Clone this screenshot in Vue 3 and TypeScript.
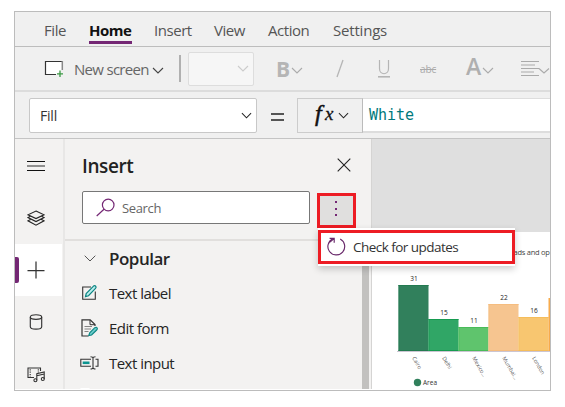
<script setup lang="ts">
interface Tab { label: string; active?: boolean }
interface Bar { value: number; top: number; color: string; edge: string; label: string }

const tabs: Tab[] = [
  { label: 'File' },
  { label: 'Home', active: true },
  { label: 'Insert' },
  { label: 'View' },
  { label: 'Action' },
  { label: 'Settings' },
]

const items = [
  { icon: 'label', text: 'Text label' },
  { icon: 'form', text: 'Edit form' },
  { icon: 'input', text: 'Text input' },
]

const bars: Bar[] = [
  { value: 31, top: 53, color: '#31805c', edge: '#237a50', label: 'Cairo' },
  { value: 15, top: 87, color: '#30a666', edge: '#169b50', label: 'Delhi' },
  { value: 11, top: 95, color: '#5fc46d', edge: '#49bb59', label: 'Mexico...' },
  { value: 22, top: 72, color: '#f6c590', edge: '#f5bd80', label: 'Mumbai...' },
  { value: 16, top: 85, color: '#f8c670', edge: '#f5bd5b', label: 'London' },
]
</script>

<template>
  <div class="page">
    <div class="window">
      <nav class="tabs">
        <span v-for="t in tabs" :key="t.label" class="tab" :class="{ active: t.active }">{{ t.label }}</span>
      </nav>

      <div class="toolbar">
        <svg class="new-icon" width="20" height="18" viewBox="0 0 20 18" fill="none">
          <path d="M12 14.5H1.5V1.5H18.5V9" fill="#fff" />
          <path d="M12 14.5H1.5V1.5H18" stroke="#333" stroke-width="1.2" />
          <path d="M18.3 1V10" stroke="#888" stroke-width="1.5" />
          <path d="M16 10.5V17M13 13.8H19" stroke="#3c9a45" stroke-width="1.3" />
        </svg>
        <span class="new-text">New screen</span>
        <svg class="chev dark" width="12" height="7" viewBox="0 0 12 7"><path d="M1 1L6 6L11 1" /></svg>
        <span class="sep"></span>
        <span class="combo"><svg class="chev" width="12" height="7" viewBox="0 0 12 7"><path d="M1 1L6 6L11 1" /></svg></span>
        <span class="bold">B</span>
        <svg class="chev c-bold" width="12" height="7" viewBox="0 0 12 7"><path d="M1 1L6 6L11 1" /></svg>
        <svg class="slash" width="8" height="19" viewBox="0 0 8 19"><path d="M1 18L7 1" stroke="#b5b5b5" stroke-width="1.3" /></svg>
        <svg class="under" width="12" height="19" viewBox="0 0 12 19" fill="none" stroke="#b5b5b5"><path d="M1.5 1V9.5C1.5 16.5 10.5 16.5 10.5 9.5V1" stroke-width="1.2" /><path d="M0 17.8H12" stroke-width="1.6" /></svg>
        <span class="strike">abc</span>
        <span class="color-a">A</span>
        <svg class="chev c-a" width="12" height="7" viewBox="0 0 12 7"><path d="M1 1L6 6L11 1" /></svg>
        <svg class="align" width="29" height="17" viewBox="0 0 29 17" fill="none" stroke="#aaa" stroke-width="1.1"><path d="M0 1.5H18M0 5H14M0 8.5H18M0 12H13M0 15.5H18" /><path d="M18 8.5L23 13L28 8.5" /></svg>
      </div>

      <div class="formula">
        <div class="property"><span>Fill</span><svg class="chev black" width="11" height="7" viewBox="0 0 12 7"><path d="M1 1L6 6L11 1" /></svg></div>
        <svg class="equals" width="13" height="8" viewBox="0 0 13 8"><path d="M0 1H13M0 7H13" stroke="#222" stroke-width="1.7" /></svg>
        <div class="fx"><span class="f">f</span><span class="x">x</span><svg class="chev black" width="11" height="7" viewBox="0 0 12 7"><path d="M1 1L6 6L11 1" /></svg></div>
        <div class="expr">White</div>
      </div>

      <div class="body">
        <aside class="rail">
          <div class="rail-item menu">
            <svg width="18" height="12" viewBox="0 0 18 12" stroke-width="1"><path d="M0 1.5H18M0 10.5H18" stroke="#111" /><path d="M0 6H18" stroke="#777" stroke-width="1.6" /></svg>
          </div>
          <div class="rail-item layers">
            <svg width="18" height="17" viewBox="0 0 18 17" fill="none" stroke="#252525" stroke-width="1.1"><path d="M9 1L17 4.8L9 8.6L1 4.8Z" /><path d="M3.5 6.2L1 7.6L9 11.6L17 7.6L14.5 6.2M3.5 9.4L1 10.8L9 15.2L17 10.8L14.5 9.4" /></svg>
          </div>
          <div class="rail-item current">
            <svg width="18" height="18" viewBox="0 0 18 18"><path d="M9 .5V17.5M.5 9.5H17.5" stroke="#333" stroke-width="1.25" /></svg>
          </div>
          <div class="rail-item data">
            <svg width="14" height="16" viewBox="0 0 14 16" fill="none" stroke="#333" stroke-width="1.15"><ellipse cx="7" cy="3" rx="5.7" ry="2.3" /><path d="M1.3 3V12.7C1.3 16 12.7 16 12.7 12.7V3" /></svg>
          </div>
          <div class="rail-item media">
            <svg width="19" height="17" viewBox="0 0 19 17" fill="none" stroke="#333" stroke-width="1.1"><path d="M7 11.5H1V2H13.5V5" /><path d="M3.2 3.2V11M11.3 3.2V6.5" stroke-dasharray="1.2 1.2" /><path d="M9.8 14.2V7.8L17.2 6V13M9.8 9.8L17.2 8" /><circle cx="8.4" cy="14.3" r="1.5" /><circle cx="15.8" cy="13" r="1.5" /></svg>
          </div>
        </aside>

        <section class="panel">
          <header class="panel-head">
            <h2>Insert</h2>
            <svg width="14" height="14" viewBox="0 0 14 14"><path d="M.7 .7L13.3 13.3M13.3 .7L.7 13.3" stroke="#222" stroke-width="1.1" /></svg>
          </header>
          <div class="search-row">
            <div class="search">
              <svg width="19" height="19" viewBox="0 0 19 19" fill="none" stroke="#742774" stroke-width="1.2"><circle cx="12.2" cy="7" r="5.8" /><path d="M8 11.2L.7 18" /></svg>
              <span>Search</span>
            </div>
            <div class="more">
              <i></i><i></i><i></i>
              <div class="popup">
                <div class="option">
                  <svg width="19" height="19" viewBox="0 0 19 19" fill="none" stroke="#68286a" stroke-width="1.15"><path d="M13.2 2.1A8.4 8.4 0 1 1 6 1.8" /><path d="M2.6 1.3H7.2V5.8M7 1.5L3 5.2" /></svg>
                  <span>Check for updates</span>
                </div>
              </div>
            </div>
          </div>
          <div class="tree">
            <div class="list">
              <div class="group">
                <svg width="12" height="7" viewBox="0 0 12 7" fill="none"><path d="M.7 .7L6 6L11.3 .7" stroke="#555" /></svg>
                <span>Popular</span>
              </div>
              <div v-for="it in items" :key="it.icon" class="item">
                <svg v-if="it.icon === 'label'" width="18" height="18" viewBox="0 0 18 18" fill="none">
                  <path d="M10.5 3H2.2V15.2H14.8V7.5" stroke="#333" stroke-width="1.1" />
                  <path d="M5 12.6L5.7 9.5L13 2.1Q14.4 1.2 15.3 2.4Q16 3.5 15 4.4L8 11.7Z" fill="#bceeed" stroke="#0b8583" stroke-width="1.2" />
                </svg>
                <svg v-else-if="it.icon === 'form'" width="18" height="18" viewBox="0 0 18 18" fill="none">
                  <path d="M8 17H1.5V.8H9.7L14.5 5.5V7" stroke="#333" stroke-width="1.2" /><path d="M9.5 1V5.7H14.5" stroke="#333" />
                  <path d="M4 7.5H11.5M4 10H10.5M4 12.5H8" stroke="#777" stroke-width=".9" />
                  <path d="M8.3 16.5L9.2 13.8L14.3 8.7Q16 7.7 16.7 9Q17.3 10 16.2 11L11.1 16Z" fill="#6ccdcb" stroke="#0b8583" stroke-width="1.1" />
                </svg>
                <svg v-else width="19" height="14" viewBox="0 0 19 14" fill="none">
                  <path d="M11 10.2H.8V3.3H11M15.5 3.3H18V10.2H15.5" stroke="#333" stroke-width="1.1" />
                  <path d="M2.7 6.8H9.5" stroke="#0b9490" stroke-width="2.6" />
                  <path d="M10.5 .8Q13 .8 13 2V11.8Q13 13 10.5 13M15.5 .8Q13 .8 13 2M13 11.8Q13 13 15.5 13" stroke="#333" stroke-width="1.1" />
                </svg>
                <span>{{ it.text }}</span>
              </div>
              <div class="next-item"></div>
            </div>
            <div class="scrollbar"></div>
          </div>
        </section>

        <main class="canvas">
          <div class="screen">
            <svg width="179" height="157" viewBox="0 0 179 157">
              <text class="chart-title" x="141.5" y="23">ads and op</text>
              <g v-for="(b, i) in bars" :key="b.label">
                <rect :x="26.5 + i * 30" :y="b.top" width="30" :height="119 - b.top" :fill="b.color" />
                <path :d="`M${26.5 + i * 30} ${b.top + .5}h30`" :stroke="b.edge" />
                <path :d="`M${27 + i * 30} ${b.top}V119`" :stroke="b.edge" stroke-width=".7" />
                <path :d="`M${26.5 + i * 30} 118.5h30`" :stroke="b.edge" />
                <text class="value" :x="42 + i * 30" :y="b.top - 4">{{ b.value }}</text>
                <text class="city" :transform="`translate(${40 + i * 30} 126) rotate(60)`">{{ b.label }}</text>
              </g>
              <rect x="176.5" y="66" width="2.5" height="53" fill="#f8ab4c" />
              <path d="M25 119.5H179" stroke="#cbc5d2" />
              <circle cx="45.5" cy="150.5" r="3.7" fill="#31805c" />
              <text class="legend" x="51" y="153">Area</text>
            </svg>
          </div>
        </main>
      </div>
    </div>
  </div>
</template>

<style>
body { margin: 0; background: #fff; overflow: hidden; }
</style>

<style scoped>
.page { box-sizing: border-box; width: 565px; height: 407px; padding: 11px 0 0 14px; background: #fff; font-family: "Open Sans", "Noto Sans", sans-serif; }
.window { box-sizing: border-box; width: 537px; height: 380px; border: 1px solid #bcbcbc; background: #f0f0f0; overflow: hidden; }
svg { display: block; flex: none; }
span, h2 { white-space: nowrap; }
.tabs { box-sizing: border-box; height: 35px; border-bottom: 1px solid #bdbdbd; display: grid; grid-template-columns: 45px 65px 60px 54px 65px 80px; padding-left: 29px; }
.tab { justify-self: start; height: 31.5px; line-height: 36px; font-size: 15px; letter-spacing: -.45px; color: #555; }
.tab:last-child { letter-spacing: -.2px; }
.tab.active { box-sizing: border-box; width: 43px; height: 32px; font-weight: 700; color: #111; border-bottom: 3px solid #742774; letter-spacing: -.5px; }
.toolbar { box-sizing: border-box; height: 45px; border-bottom: 2px solid #dcdcdc; display: flex; align-items: center; padding-left: 29px; }
.chev { fill: none; stroke: #ababab; stroke-width: 1.1; }
.chev.dark { stroke: #444; margin: 3px 0 0 3px; }
.chev.black { stroke: #222; }
.new-text { width: 75px; margin-left: 10px; font-size: 15px; letter-spacing: -.7px; color: #666; }
.sep { width: 2px; height: 27px; background: #b0b0b0; margin-left: 15px; }
.combo { box-sizing: border-box; width: 66px; height: 34px; margin-left: 7px; border: 1px solid #ddd; border-radius: 2px; background: #f6f6f6; display: flex; align-items: center; justify-content: flex-end; padding-right: 4px; }
.combo .chev { stroke: #ccc; }
.bold { margin-left: 22px; width: 15px; font-size: 21px; font-weight: 700; color: #b5b5b5; }
.c-bold { margin-top: 4px; }
.slash { margin-left: 33px; }
.under { margin-left: 34px; }
.strike { width: 17px; margin-left: 30px; font-size: 10px; letter-spacing: -.1px; text-decoration: line-through; color: #aaa; }
.color-a { width: 15px; margin-left: 29px; font-size: 23px; font-weight: 600; color: #afafaf; line-height: 26px; margin-bottom: 5px; }
.c-a { margin: 4px 0 0 1px; }
.align { margin-left: 27px; }
.formula { box-sizing: border-box; height: 47px; border-bottom: 1px solid #c4c4c4; display: flex; padding: 6px 0 6px 14px; }
.property { box-sizing: border-box; width: 228px; height: 35px; border: 1px solid #c8c8c8; border-radius: 2px; background: #fff; display: flex; align-items: center; justify-content: space-between; padding: 0 4px 0 10px; font-size: 14px; letter-spacing: -.2px; color: #333; }
.equals { margin: 15px 0 0 14px; }
.fx { box-sizing: border-box; width: 66px; height: 35px; margin-left: 13px; border: 1px solid #ccc; border-right-color: #bbb; display: flex; align-items: center; padding-left: 17px; font-family: "Liberation Serif", serif; font-style: italic; color: #111; }
.f { width: 10px; font-size: 24px; line-height: 28px; margin-bottom: 6px; -webkit-text-stroke: .5px #111; }
.x { width: 10px; font-size: 19px; margin-bottom: 4px; -webkit-text-stroke: .3px #111; }
.fx .chev { margin-left: 3px; }
.expr { box-sizing: border-box; flex: 1; height: 35px; border: solid #ddd; border-width: 1px 0 2px; background: #fff; padding-left: 6px; font-family: "DejaVu Sans Mono", monospace; font-size: 15px; line-height: 32px; color: #00797c; }
.body { display: flex; height: 250px; background: #f3f2f1; border-bottom: 1px solid #fff; }
.rail { box-sizing: border-box; width: 50px; border-right: 2px solid #e8e7e6; }
.rail-item { width: 47px; height: 52px; display: flex; align-items: center; box-sizing: border-box; padding-left: 12px; }
.menu { height: 53px; }
.layers { height: 52px; }
.current { background: #fff; position: relative; }
.current::before { content: ""; position: absolute; left: 0; top: 13px; width: 4px; height: 26px; border-radius: 0 2px 2px 0; background: #742774; }
.data { padding-left: 14px; }
.media { height: 41px; overflow: hidden; padding-top: 12px; }
.panel { width: 306px; display: flex; flex-direction: column; }
.panel-head { height: 52px; display: flex; align-items: center; justify-content: space-between; padding: 0 20px 0 17px; }
h2 { margin: 2px 0 0; font-size: 19px; font-weight: 600; letter-spacing: -.4px; color: #222; }
.panel-head { box-sizing: border-box; }
.search-row { box-sizing: border-box; height: 50px; display: flex; padding: 0 0 0 17px; border-bottom: 2px solid #e1dfdd; }
.search { box-sizing: border-box; width: 228px; height: 33px; border: 1px solid #777; border-radius: 2px; background: #fff; display: flex; align-items: center; padding-left: 13px; font-size: 13px; letter-spacing: -.35px; color: #666; }
.search span { margin-left: 7px; }
.more { box-sizing: border-box; position: relative; width: 39px; height: 35px; margin: 2px 0 0 7px; background: #e0dfde; border: 3px solid #ed1c24; display: flex; flex-direction: column; align-items: flex-start; padding: 5px 0 0 15px; gap: 4.5px; }
.more i { width: 2px; height: 2px; background: #742774; }
.popup { position: absolute; z-index: 2; left: -2px; top: 32px; width: 197px; height: 36px; padding-top: 2px; background: #fff; box-shadow: 0 3px 7px #0003; }
.option { box-sizing: border-box; width: 197px; height: 34px; border: 3px solid #ed1c24; display: flex; align-items: center; padding-left: 6px; background: #fff; font-size: 13.5px; letter-spacing: -.53px; color: #333; }
.option svg { margin-bottom: 2px; }
.option span { margin-left: 7px; margin-bottom: 1px; }
.tree { flex: 1; display: flex; min-height: 0; }
.list { width: 297px; overflow: hidden; }
.group { display: flex; align-items: center; height: 34px; padding-left: 19px; font-size: 17px; font-weight: 600; letter-spacing: -.5px; color: #252525; }
.group span { margin: 1px 0 0 13px; }
.item { display: flex; align-items: center; height: 35px; padding-left: 15px; font-size: 15px; letter-spacing: -.53px; color: #252525; }
.item svg { width: 19px; }
.item span { margin-left: 10px; }
.next-item { width: 10px; height: 3px; margin: 8px 0 0 15px; background: #fff; border-radius: 3px; }
.scrollbar { width: 7px; background: #c2c1bf; }
.canvas { box-sizing: border-box; flex: 1; min-width: 0; background: #dfdfdf; padding-top: 93px; border-left: 1px solid #d5d4d3; overflow: hidden; }
.screen { height: 157px; width: 179px; background: #fff; }
.chart-title { font-size: 7.5px; fill: #444; letter-spacing: -.25px; }
.value { font-size: 6.5px; fill: #222; text-anchor: middle; }
.city { font-size: 5.5px; fill: #555; }
.legend { font-size: 6.5px; fill: #333; }
</style>
